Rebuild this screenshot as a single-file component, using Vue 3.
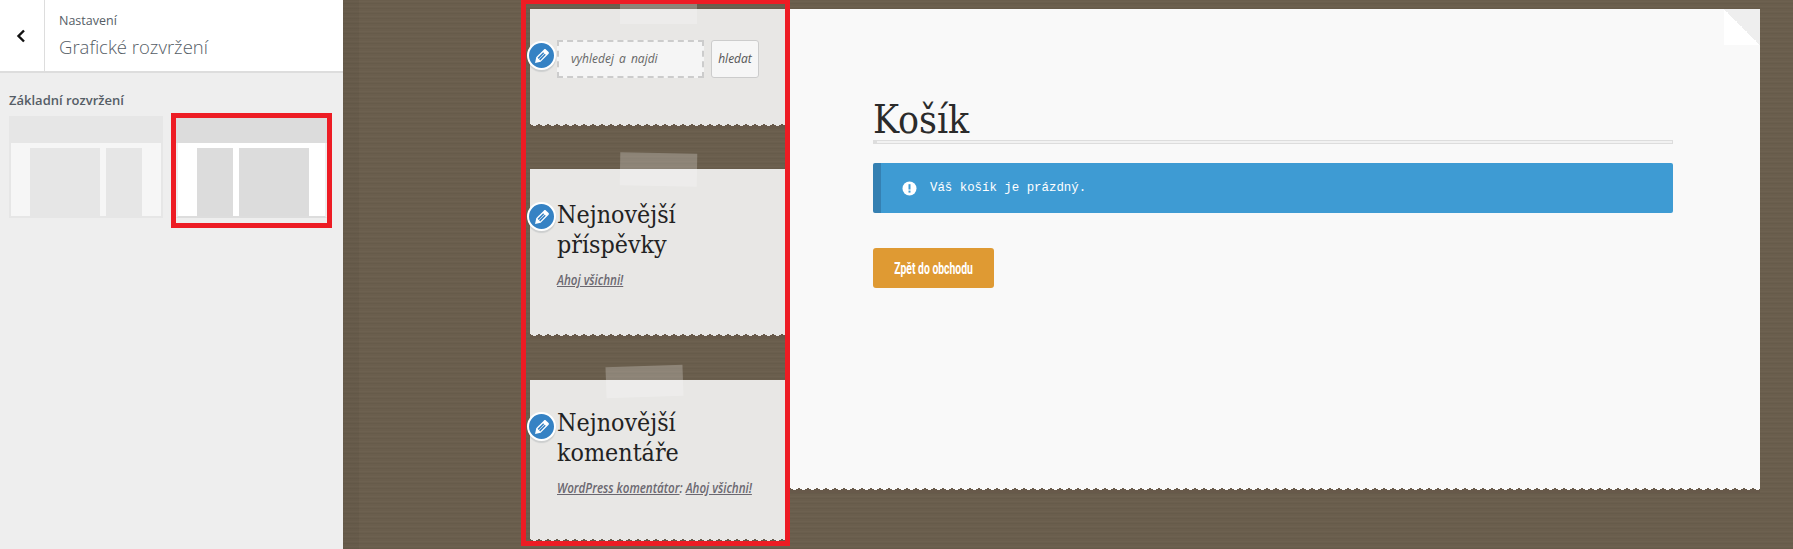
<script setup>
const pencil = "M13.89 3.39l2.71 2.72c.46.46.42 1.24.03 1.64l-8.01 8.02-5.56 1.16 1.16-5.58s7.6-7.63 7.99-8.03c.39-.39 1.22-.39 1.68.07zm-2.73 2.79l-5.59 5.61 1.11 1.11 5.54-5.65zm-2.97 8.23l5.58-5.6-1.07-1.08-5.59 5.6z";
</script>

<template>
  <div class="app">
    <aside class="sidebar">
      <header class="head">
        <button class="back" aria-label="Zpět">
          <svg width="12" height="14" viewBox="0 0 12 14"><path d="M9 1.5 3.5 7 9 12.5" fill="none" stroke="#111" stroke-width="2.4"/></svg>
        </button>
        <div class="head-text">
          <span class="crumb">Nastavení</span>
          <span class="title">Grafické rozvržení</span>
        </div>
      </header>
      <div class="panel">
        <div class="panel-label">Základní rozvržení</div>
        <div class="thumbs">
          <div class="thumb">
            <div class="thumb-top"></div>
            <div class="thumb-body">
              <div class="block wide"></div>
              <div class="block narrow"></div>
            </div>
          </div>
          <div class="thumb-frame">
            <div class="thumb selected">
              <div class="thumb-top"></div>
              <div class="thumb-body">
                <div class="block narrow"></div>
                <div class="block wide"></div>
              </div>
            </div>
          </div>
        </div>
      </div>
    </aside>

    <main class="canvas">
      <section class="column">
        <div class="widget w-search">
          <i class="tape"></i>
          <span class="edit"><svg width="20" height="20" viewBox="0 0 20 20"><path :d="pencil" fill="#fff"/></svg></span>
          <div class="search">
            <div class="search-input">vyhledej a najdi</div>
            <div class="search-btn">hledat</div>
          </div>
          <i class="teeth"></i>
        </div>
        <div class="widget w-posts">
          <i class="tape tilt-a"></i>
          <span class="edit"><svg width="20" height="20" viewBox="0 0 20 20"><path :d="pencil" fill="#fff"/></svg></span>
          <h2>Nejnovější<br>příspěvky</h2>
          <p class="hand"><a>Ahoj všichni!</a></p>
          <i class="teeth"></i>
        </div>
        <div class="widget w-comments">
          <i class="tape tilt-b"></i>
          <span class="edit"><svg width="20" height="20" viewBox="0 0 20 20"><path :d="pencil" fill="#fff"/></svg></span>
          <h2>Nejnovější<br>komentáře</h2>
          <p class="hand"><a>WordPress komentátor</a>: <a>Ahoj všichni!</a></p>
          <i class="teeth"></i>
        </div>
      </section>

      <article class="page">
        <i class="fold"></i>
        <h1>Košík</h1>
        <div class="rule"></div>
        <div class="notice">
          <svg width="15" height="15" viewBox="0 0 15 15"><circle cx="7.5" cy="7.5" r="7" fill="#fff"/><rect x="6.5" y="3.2" width="2" height="5.3" fill="#3e9bd3"/><rect x="6.5" y="9.6" width="2" height="2" fill="#3e9bd3"/></svg>
          <span>Váš košík je prázdný.</span>
        </div>
        <a class="cta"><span>Zpět do obchodu</span></a>
        <i class="teeth page-teeth"></i>
      </article>
    </main>
  </div>
</template>

<style>
html, body { margin: 0; overflow: hidden; }
</style>

<style scoped>
.app {
  display: flex;
  width: 1793px;
  height: 549px;
  overflow: hidden;
  font-family: "Open Sans", sans-serif;
}
.sidebar {
  width: 343px;
  flex: none;
  background: #eee;
}
.head {
  display: flex;
  height: 71px;
  background: #fff;
  border-bottom: 2px solid #ddd;
}
.back {
  width: 45px;
  padding: 0 3px 0 0;
  border: 0;
  border-right: 1px solid #ddd;
  background: #fff;
  display: flex;
  align-items: center;
  justify-content: center;
}
.head-text {
  display: flex;
  flex-direction: column;
  padding: 12px 0 0 14px;
  color: #555d66;
}
.crumb { font-size: 12.5px; line-height: 18px; }
.title { font-size: 18.5px; font-weight: 300; line-height: 28px; margin-top: 3px; }
.panel { padding: 17px 0 0 9px; }
.panel-label {
  font-size: 13px;
  font-weight: 600;
  line-height: 20px;
  color: #555d66;
}
.thumbs {
  display: flex;
  align-items: flex-start;
  gap: 8px;
  margin-top: 6px;
}
.thumb {
  width: 154px;
  height: 102px;
  flex: none;
  box-sizing: border-box;
  background: #f6f6f6;
  border: 2px solid #e6e6e6;
  border-top: 0;
  display: flex;
  flex-direction: column;
}
.thumb-top { height: 27px; background: #e6e6e6; flex: none; margin: 0 -2px; }
.thumb-body {
  display: flex;
  justify-content: center;
  gap: 6px;
  padding-top: 5px;
  height: 68px;
  box-sizing: content-box;
}
.block { height: 68px; background: #e6e6e6; }
.wide { width: 70px; }
.narrow { width: 36px; }
.thumb-frame {
  width: 161px;
  height: 115px;
  box-sizing: border-box;
  border: 5px solid #ed1c24;
  margin-top: -3px;
  flex: none;
  overflow: hidden;
  background: #eee;
}
.selected {
  width: 151px;
  height: 100px;
  background: #fff;
  border-color: #eee;
  border-bottom-color: #ddd;
}
.selected .thumb-top { height: 25px; }
.selected .thumb-top, .selected .block { background: #dcdcdc; }
.selected .thumb-body { justify-content: flex-start; padding-left: 19px; }

.canvas {
  flex: 1;
  display: flex;
  align-items: flex-start;
  padding-left: 178px;
  background-color: #6a5e4d;
  background-image:
    linear-gradient(90deg, rgba(0,0,0,.04) 0 16px, transparent 16px),
    repeating-linear-gradient(0deg, rgba(0,0,0,.035) 0 1px, transparent 1px 2px, rgba(255,255,255,.018) 2px 3px, transparent 3px 5px);
}
.column {
  width: 269px;
  height: 546px;
  flex: none;
  box-sizing: border-box;
  border: 5px solid #ed1c24;
  border-top-width: 4px;
  padding: 5px 0 0 4px;
  display: flex;
  flex-direction: column;
  overflow: hidden;
}
.widget {
  position: relative;
  background: #e8e7e5;
  box-sizing: border-box;
  padding: 0 0 0 27px;
  flex: none;
}
.w-search { height: 119px; padding-top: 31px; }
.w-posts { height: 169px; margin-top: 41px; padding-top: 31px; }
.w-comments { height: 163px; margin-top: 42px; padding-top: 28px; }
.tape {
  position: absolute;
  left: 90px;
  top: -6px;
  width: 77px;
  height: 21px;
  background: rgba(255,255,255,.24);
}
.tilt-a { top: -16px; height: 33px; transform: rotate(1deg); }
.tilt-b { left: 76px; top: -14px; height: 31px; transform: rotate(-2deg); }
.edit {
  position: absolute;
  left: -3px;
  width: 25px;
  height: 25px;
  border: 2px solid #fff;
  border-radius: 50%;
  background: #3582c4;
  box-shadow: 0 2px 1px rgba(46,68,83,.15);
  display: flex;
  align-items: center;
  justify-content: center;
}
.w-search .edit { top: 32px; }
.w-posts .edit { top: 33px; }
.w-comments .edit { top: 32px; }
.search { display: flex; gap: 7px; }
.search-input {
  width: 147px;
  height: 38px;
  box-sizing: border-box;
  border: 2px dashed #ccc;
  background: #f5f5f5;
  padding-left: 12px;
  font: italic 12px/34px "Open Sans", sans-serif;
  word-spacing: 2px;
  color: #666;
}
.search-btn {
  width: 48px;
  height: 38px;
  box-sizing: border-box;
  border: 1px solid #ccc;
  border-radius: 3px;
  background: #f6f6f6;
  text-align: center;
  font: italic 12px/36px "Open Sans", sans-serif;
  color: #555;
}
h2 {
  margin: 0;
  font: 400 24.8px/30px "DejaVu Serif Condensed", "Liberation Serif", serif;
  color: #222;
}
.hand {
  margin: 11px 0 0;
  font: italic 600 14px/18px "Open Sans", sans-serif;
  color: #6b6870;
  white-space: nowrap;
  transform: scaleX(.83);
  transform-origin: left center;
}
.hand a { text-decoration: underline; }
.teeth {
  position: absolute;
  left: 0;
  right: 0;
  bottom: 0;
  height: 4px;
  background-image:
    linear-gradient(to top right, #67594a 50%, transparent 50%),
    linear-gradient(to top left, #67594a 50%, transparent 50%);
  background-size: 9px 4px;
}
.page-teeth { height: 5px; background-size: 9px 5px; }
.page {
  position: relative;
  width: 970px;
  height: 484px;
  box-sizing: border-box;
  margin-top: 9px;
  padding: 91px 87px 0 83px;
  flex: none;
  background: #f9f9f9;
}
.fold {
  position: absolute;
  right: 0;
  top: 0;
  width: 36px;
  height: 36px;
  background: linear-gradient(45deg, #fff 50%, #eee 50%);
}
h1 {
  margin: 0;
  font: 400 38.8px/40px "DejaVu Serif Condensed", "Liberation Serif", serif;
  color: #2b2b2b;
}
.rule {
  height: 4px;
  box-sizing: border-box;
  background: #f2f2f2;
  border: 1px solid #ddd;
  border-left-width: 4px;
}
.notice {
  height: 50px;
  margin-top: 19px;
  box-sizing: border-box;
  border-left: 8px solid #3580b2;
  border-radius: 2px;
  background: #3e9bd3;
  display: flex;
  align-items: center;
  gap: 13px;
  padding-left: 21px;
  font: 12.4px "Liberation Mono", monospace;
  color: #fff;
}
.cta {
  display: flex;
  align-items: center;
  justify-content: center;
  width: 121px;
  height: 40px;
  margin-top: 35px;
  border-radius: 3px;
  background: #df9a33;
  color: #fff;
  font: 700 16px "Roboto", sans-serif;
  white-space: nowrap;
}
.cta span { transform: scaleX(.65); }
</style>
